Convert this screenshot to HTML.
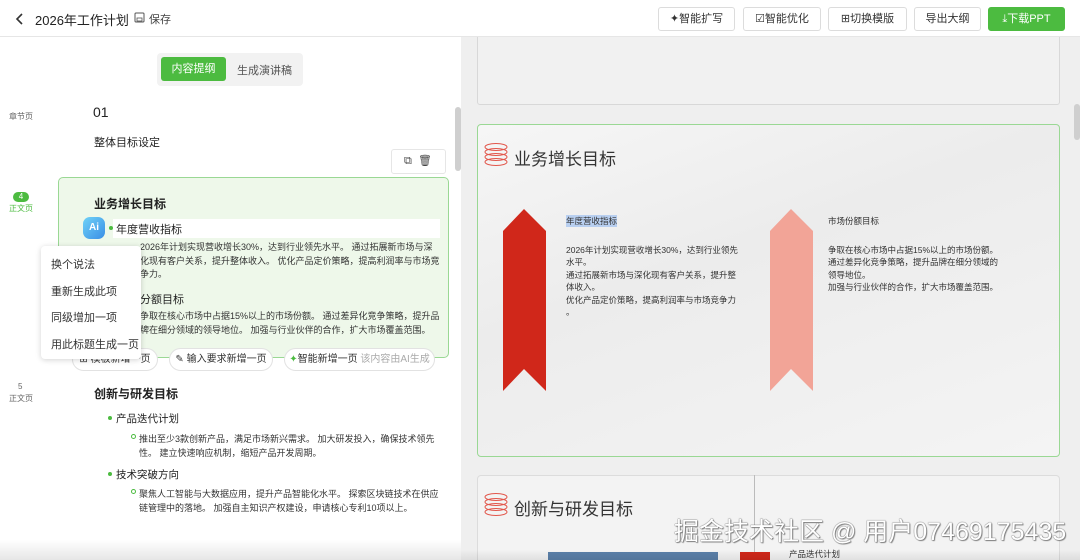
<!DOCTYPE html>
<html style="width:1080px;height:560px;overflow:hidden"><head><meta charset="utf-8"><style>
*{box-sizing:border-box;margin:0;padding:0}
body{width:1080px;height:560px;overflow:hidden;font-family:"Liberation Sans","Noto Sans CJK SC",sans-serif;color:#222;background:#fff;position:relative}
.a{position:absolute;white-space:nowrap}
.hdr{position:absolute;left:0;top:0;width:1080px;height:37px;background:#fff;border-bottom:1px solid #e6e6e6}
.btn{position:absolute;top:7px;height:24px;border:1px solid #dcdcdc;border-radius:3px;background:#fff;font-size:11px;color:#333;text-align:center;line-height:22px}
.left{position:absolute;left:0;top:37px;width:461px;height:523px;background:#fff;overflow:hidden}
.right{position:absolute;left:461px;top:37px;width:619px;height:523px;background:#efefef;overflow:hidden}
.g{color:#4cbb40}
.pill{position:absolute;top:348px;height:23px;border:1px solid #e2e2e2;border-radius:12px;background:#fff;font-size:10px;line-height:21px;text-align:center;color:#333}
.mi{position:absolute;left:51px;font-size:11px;color:#333}
.dot{position:absolute;width:4px;height:4px;border-radius:2px;background:#4cbb40}
.od{position:absolute;width:5px;height:5px;border-radius:3px;border:1px solid #4cbb40}
</style></head><body>
<div class="hdr">
<svg class="a" style="left:15px;top:12px" width="10" height="14"><path d="M7 2L2 7l5 5" stroke="#333" stroke-width="1.6" fill="none"/></svg>
<div class="a" style="left:35px;top:10px;font-size:13px;color:#222">2026年工作计划</div>
<svg class="a" style="left:134px;top:12px" width="11" height="11"><rect x="1" y="1" width="9" height="9" rx="1" stroke="#555" fill="none"/><rect x="3" y="6" width="5" height="3" stroke="#555" fill="none" stroke-width=".8"/></svg>
<div class="a" style="left:149px;top:11px;font-size:11px;color:#444">保存</div>
<div class="btn" style="left:658px;width:77px">✦智能扩写</div>
<div class="btn" style="left:743px;width:78px">☑智能优化</div>
<div class="btn" style="left:828px;width:79px">⊞切换模版</div>
<div class="btn" style="left:914px;width:67px">导出大纲</div>
<div class="btn" style="left:988px;width:77px;background:#4cbb40;border-color:#4cbb40;color:#fff">⤓下载PPT</div>
</div>

<div class="left">
<div class="a" style="left:157px;top:16px;width:146px;height:33px;background:#f2f2f2;border-radius:4px"></div>
<div class="a" style="left:161px;top:20px;width:65px;height:24px;background:#4cbb40;border-radius:3px;color:#fff;font-size:11px;text-align:center;line-height:24px">内容提纲</div>
<div class="a" style="left:237px;top:25px;font-size:11px;color:#555">生成演讲稿</div>
<div class="a" style="left:455px;top:70px;width:6px;height:64px;background:#cfcfcf;border-radius:3px"></div>

<div class="a" style="left:9px;top:74px;font-size:8px;color:#666">章节页</div>
<div class="a" style="left:93px;top:67px;font-size:14px">01</div>
<div class="a" style="left:94px;top:97px;font-size:11px">整体目标设定</div>
<div class="a" style="left:391px;top:112px;width:55px;height:25px;border:1px solid #e6e6e6;border-radius:3px;background:#fff;font-size:11px;line-height:23px;padding-left:12px;color:#444">⧉ &nbsp;🗑</div>

<div class="a" style="left:13px;top:155px;width:16px;height:10px;background:#4cbb40;border-radius:5px;color:#fff;font-size:8px;text-align:center;line-height:10px">4</div>
<div class="a g" style="left:9px;top:166px;font-size:8px">正文页</div>

<div class="a" style="left:58px;top:140px;width:391px;height:181px;background:#eef8ea;border:1px solid #9ad894;border-radius:5px"></div>
<div class="a" style="left:94px;top:158px;font-size:12px;font-weight:bold">业务增长目标</div>
<div class="a" style="left:113px;top:182px;width:327px;height:19px;background:#fff"></div>
<div class="a" style="left:83px;top:180px;width:22px;height:22px;border-radius:7px;background:linear-gradient(135deg,#6fd2f7,#3a8ee6);color:#fff;font-size:10px;font-weight:bold;text-align:center;line-height:22px">Ai</div>
<div class="dot" style="left:109px;top:189px"></div>
<div class="a" style="left:116px;top:184px;font-size:11px">年度营收指标</div>
<div class="a" style="left:140px;top:204px;font-size:9px;line-height:13.5px;color:#333">2026年计划实现营收增长30%，达到行业领先水平。 通过拓展新市场与深<br>化现有客户关系，提升整体收入。 优化产品定价策略，提高利润率与市场竞<br>争力。</div>
<div class="a" style="left:140px;top:254px;font-size:11px">分额目标</div>
<div class="a" style="left:140px;top:273px;font-size:9px;line-height:13.5px;color:#333">争取在核心市场中占据15%以上的市场份额。 通过差异化竞争策略，提升品<br>牌在细分领域的领导地位。 加强与行业伙伴的合作，扩大市场覆盖范围。</div>

<div class="pill" style="left:72px;top:311px;width:86px">⊞ 模板新增一页</div>
<div class="pill" style="left:169px;top:311px;width:104px">✎ 输入要求新增一页</div>
<div class="pill" style="left:284px;top:311px;width:151px"><span class="g">✦</span>智能新增一页 <span style="color:#aaa">该内容由AI生成</span></div>

<div class="a" style="left:41px;top:209px;width:100px;height:113px;background:#fff;border-radius:4px;box-shadow:0 1px 6px rgba(0,0,0,.18)"></div>
<div class="mi" style="top:219px">换个说法</div>
<div class="mi" style="top:246px">重新生成此项</div>
<div class="mi" style="top:272px">同级增加一项</div>
<div class="mi" style="top:299px">用此标题生成一页</div>

<div class="a" style="left:18px;top:345px;font-size:8px;color:#666">5</div>
<div class="a" style="left:9px;top:356px;font-size:8px;color:#666">正文页</div>
<div class="a" style="left:94px;top:348px;font-size:12px;font-weight:bold">创新与研发目标</div>
<div class="dot" style="left:108px;top:379px"></div>
<div class="a" style="left:116px;top:374px;font-size:10.5px">产品迭代计划</div>
<div class="od" style="left:131px;top:397px"></div>
<div class="a" style="left:139px;top:395px;font-size:9px;line-height:14px;color:#333">推出至少3款创新产品，满足市场新兴需求。 加大研发投入，确保技术领先<br>性。 建立快速响应机制，缩短产品开发周期。</div>
<div class="dot" style="left:108px;top:435px"></div>
<div class="a" style="left:116px;top:430px;font-size:10.5px">技术突破方向</div>
<div class="od" style="left:131px;top:452px"></div>
<div class="a" style="left:139px;top:450px;font-size:9px;line-height:14px;color:#333">聚焦人工智能与大数据应用，提升产品智能化水平。 探索区块链技术在供应<br>链管理中的落地。 加强自主知识产权建设，申请核心专利10项以上。</div>
<div class="a" style="left:0;top:503px;width:461px;height:20px;background:linear-gradient(#fff,#e6e6e6)"></div>
</div>

<div class="right">
<div class="a" style="left:613px;top:67px;width:6px;height:36px;background:#cfcfcf;border-radius:3px"></div>
<div class="a" style="left:16px;top:-5px;width:583px;height:73px;background:#f1f1f1;border:1px solid #d8d8d8;border-radius:3px"></div>
<div class="a" style="left:16px;top:87px;width:583px;height:333px;background:linear-gradient(160deg,#f6f6f6,#ececec 40%,#f4f4f4);border:1px solid #9ad894;border-radius:4px"></div>
<svg class="a" style="left:22px;top:105px" width="26" height="26"><g stroke="#e2574c" fill="none" stroke-width="1"><ellipse cx="13" cy="5" rx="11" ry="3.5"/><ellipse cx="13" cy="10" rx="11" ry="3.5"/><ellipse cx="13" cy="15" rx="11" ry="3.5"/><ellipse cx="13" cy="20" rx="11" ry="3.5"/></g></svg>
<div class="a" style="left:53px;top:108px;font-size:17px;color:#333">业务增长目标</div>
<svg class="a" style="left:42px;top:172px" width="43" height="182"><polygon points="0,22 21,0 43,22 43,182 21,160 0,182" fill="#d0271a"/></svg>
<div class="a" style="left:105px;top:178px;font-size:8.5px;color:#333;background:#b8cff0">年度营收指标</div>
<div class="a" style="left:105px;top:207px;font-size:8.5px;line-height:12.4px;color:#333">2026年计划实现营收增长30%，达到行业领先<br>水平。<br>通过拓展新市场与深化现有客户关系，提升整<br>体收入。<br>优化产品定价策略，提高利润率与市场竞争力<br>。</div>
<svg class="a" style="left:309px;top:172px" width="43" height="182"><polygon points="0,22 21,0 43,22 43,182 21,160 0,182" fill="#f2a497"/></svg>
<div class="a" style="left:367px;top:178px;font-size:8.5px;color:#333">市场份额目标</div>
<div class="a" style="left:367px;top:207px;font-size:8.5px;line-height:12.4px;color:#333">争取在核心市场中占据15%以上的市场份额。<br>通过差异化竞争策略，提升品牌在细分领域的<br>领导地位。<br>加强与行业伙伴的合作，扩大市场覆盖范围。</div>

<div class="a" style="left:16px;top:438px;width:583px;height:100px;background:#f3f3f3;border:1px solid #dcdcdc;border-radius:4px"></div>
<div class="a" style="left:293px;top:438px;width:1px;height:90px;background:#bbb"></div>
<svg class="a" style="left:22px;top:455px" width="26" height="26"><g stroke="#e2574c" fill="none" stroke-width="1"><ellipse cx="13" cy="5" rx="11" ry="3.5"/><ellipse cx="13" cy="10" rx="11" ry="3.5"/><ellipse cx="13" cy="15" rx="11" ry="3.5"/><ellipse cx="13" cy="20" rx="11" ry="3.5"/></g></svg>
<div class="a" style="left:53px;top:458px;font-size:17px;color:#333">创新与研发目标</div>
<div class="a" style="left:87px;top:515px;width:170px;height:10px;background:#5a7fa8"></div>
<div class="a" style="left:279px;top:515px;width:30px;height:10px;background:#d0271a"></div>
<div class="a" style="left:328px;top:511px;font-size:8.5px;color:#333">产品迭代计划</div>
<div class="a" style="left:0;top:513px;width:619px;height:10px;background:linear-gradient(rgba(0,0,0,0),rgba(0,0,0,.08))"></div>
<div class="a" style="left:213px;top:475px;font-size:25px;color:#fff;text-shadow:0 0 1px #666,0 0 1px #666,1px 1px 1px #888">掘金技术社区 @ 用户07469175435</div>
</div>
</body></html>
